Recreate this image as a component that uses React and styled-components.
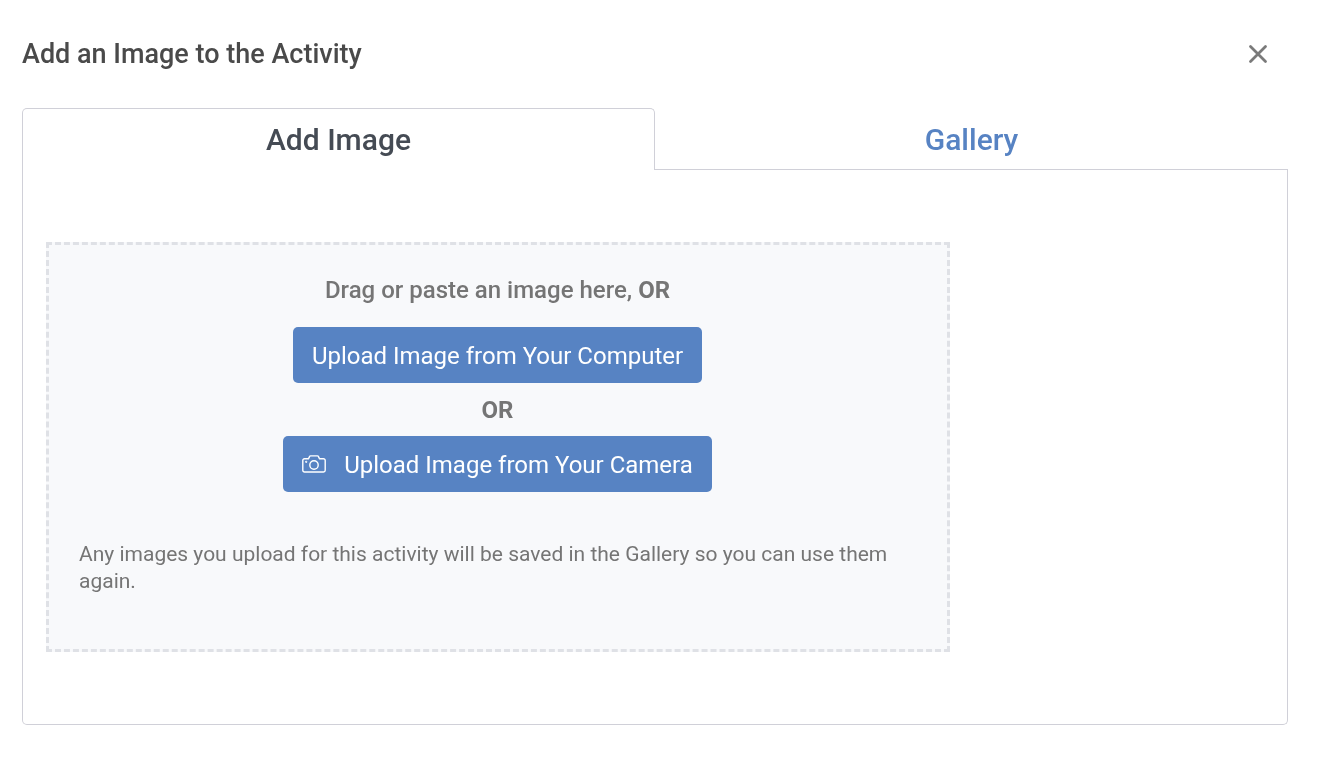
import React from 'react'
import styled, { createGlobalStyle } from 'styled-components'

const GlobalStyle = createGlobalStyle`
    html, body {
        margin: 0;
        padding: 0;
        background: #fff;
        font-family: Roboto, "Liberation Sans", sans-serif;
    }
`

const Modal = styled.div`
    width: 1322px;
    height: 774px;
    box-sizing: border-box;
    padding: 0 34px 0 22px;
    background: #fff;
    overflow: hidden;
    will-change: transform;
`

const Header = styled.div`
    height: 108px;
    display: flex;
    align-items: center;
    justify-content: space-between;
    padding-right: 20px;
    box-sizing: border-box;
`

const Title = styled.h2`
    margin: 0;
    font-size: 27px;
    font-weight: 500;
    color: #4a4a4a;
`

const CloseButton = styled.button`
    width: 20px;
    height: 20px;
    padding: 0;
    border: 0;
    background: none;
    display: flex;
    color: #7a7a7a;
`

const Tabs = styled.div`
    display: grid;
    grid-template-columns: 1fr 1fr;
    height: 62px;
`

const Tab = styled.div`
    display: flex;
    align-items: center;
    justify-content: center;
    box-sizing: border-box;
    font-size: 30px;
    font-weight: 500;
    color: ${(p) => (p.$active ? '#454b54' : '#5783c3')};
    border: 1px solid #d0d0d8;
    border-width: ${(p) => (p.$active ? '1px 1px 0 1px' : '0 0 1px 0')};
    border-radius: ${(p) => (p.$active ? '5px 5px 0 0' : '0')};
    padding-top: ${(p) => (p.$active ? '0' : '1px')};
`

const Panel = styled.div`
    height: 555px;
    box-sizing: border-box;
    padding: 72px 0 0 23px;
    border: 1px solid #d0d0d8;
    border-top: 0;
    border-radius: 0 0 5px 5px;
`

const DropZone = styled.div`
    width: 904px;
    height: 410px;
    box-sizing: border-box;
    padding: 27px 31px 0 30px;
    display: flex;
    flex-direction: column;
    align-items: center;
    background: #f8f9fb;
    border: 3px dashed #dfe1e6;
`

const Prompt = styled.div`
    height: 36px;
    line-height: 36px;
    font-size: 24px;
    font-weight: 500;
    color: #757575;

    strong {
        font-weight: 700;
    }
`

const OrLabel = styled(Prompt)`
    height: 53px;
    line-height: 55px;
    font-weight: 700;
`

const UploadButton = styled.button`
    height: 56px;
    padding: 2px 18.75px 0;
    display: flex;
    align-items: center;
    gap: 18px;
    border: 0;
    border-radius: 5px;
    background: #5783c3;
    color: #fff;
    font-family: inherit;
    font-size: 24px;
    font-weight: 400;

    svg {
        margin-top: -2px;
    }
`

const FirstButton = styled(UploadButton)`
    margin-top: 19px;
`

const Note = styled.p`
    align-self: stretch;
    margin: 49px 0 0;
    font-size: 21px;
    line-height: 27px;
    color: #757575;
`

function CloseIcon() {
    return (
        <svg width="20" height="20" viewBox="0 0 20 20" fill="none" stroke="currentColor" strokeWidth="2.8" strokeLinecap="round">
            <path d="M2.5 2.5 L17.5 17.5 M17.5 2.5 L2.5 17.5" />
        </svg>
    )
}

function CameraIcon() {
    return (
        <svg width="24" height="18" viewBox="0 0 24 18" fill="none" stroke="currentColor" strokeWidth="1.4" strokeLinejoin="round">
            <path d="M2.5 3.8 H6.4 L7.8 1.2 Q8 0.9 8.5 0.9 H15.5 Q16 0.9 16.2 1.2 L17.6 3.8 H21.5 A1.7 1.7 0 0 1 23.2 5.5 V15.3 A1.7 1.7 0 0 1 21.5 17 H2.5 A1.7 1.7 0 0 1 0.8 15.3 V5.5 A1.7 1.7 0 0 1 2.5 3.8 Z" />
            <circle cx="12" cy="10" r="4.2" />
            <circle cx="4.2" cy="6.8" r="0.4" />
        </svg>
    )
}

export default function App() {
    return (
        <Modal>
            <GlobalStyle />
            <Header>
                <Title>Add an Image to the Activity</Title>
                <CloseButton aria-label="Close"><CloseIcon /></CloseButton>
            </Header>
            <Tabs>
                <Tab $active>Add Image</Tab>
                <Tab>Gallery</Tab>
            </Tabs>
            <Panel>
                <DropZone>
                    <Prompt>Drag or paste an image here, <strong>OR</strong></Prompt>
                    <FirstButton>Upload Image from Your Computer</FirstButton>
                    <OrLabel>OR</OrLabel>
                    <UploadButton><CameraIcon />Upload Image from Your Camera</UploadButton>
                    <Note>Any images you upload for this activity will be saved in the Gallery so you can use them again.</Note>
                </DropZone>
            </Panel>
        </Modal>
    )
}
